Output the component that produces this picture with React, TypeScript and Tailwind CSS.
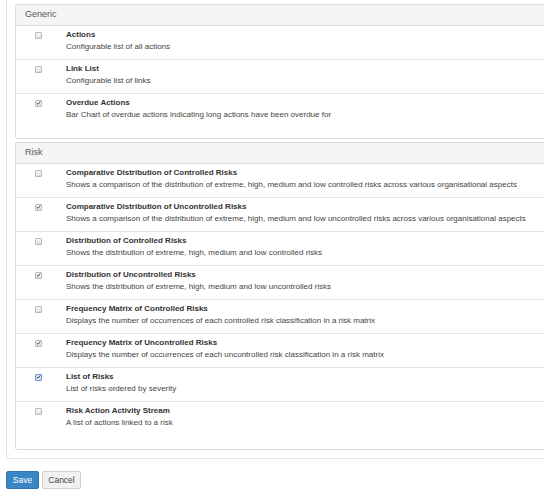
const generic = [
  { title: "Actions", desc: "Configurable list of all actions", checked: false },
  { title: "Link List", desc: "Configurable list of links", checked: false },
  {
    title: "Overdue Actions",
    desc: "Bar Chart of overdue actions indicating long actions have been overdue for",
    checked: true,
  },
];

const risk = [
  {
    title: "Comparative Distribution of Controlled Risks",
    desc: "Shows a comparison of the distribution of extreme, high, medium and low controlled risks across various organisational aspects",
    checked: false,
  },
  {
    title: "Comparative Distribution of Uncontrolled Risks",
    desc: "Shows a comparison of the distribution of extreme, high, medium and low uncontrolled risks across various organisational aspects",
    checked: true,
  },
  {
    title: "Distribution of Controlled Risks",
    desc: "Shows the distribution of extreme, high, medium and low controlled risks",
    checked: false,
  },
  {
    title: "Distribution of Uncontrolled Risks",
    desc: "Shows the distribution of extreme, high, medium and low uncontrolled risks",
    checked: true,
  },
  {
    title: "Frequency Matrix of Controlled Risks",
    desc: "Displays the number of occurrences of each controlled risk classification in a risk matrix",
    checked: false,
  },
  {
    title: "Frequency Matrix of Uncontrolled Risks",
    desc: "Displays the number of occurrences of each uncontrolled risk classification in a risk matrix",
    checked: true,
  },
  { title: "List of Risks", desc: "List of risks ordered by severity", checked: true, focus: true },
  {
    title: "Risk Action Activity Stream",
    desc: "A list of actions linked to a risk",
    checked: false,
  },
];

type Item = { title: string; desc: string; checked: boolean; focus?: boolean };

function Check({ checked, focus }: { checked: boolean; focus?: boolean }) {
  return (
    <span
      className={
        focus
          ? "flex h-[7px] w-[7px] items-center justify-center rounded-[1px] border border-[#6d97c9] bg-[#d6e3f3]"
          : "flex h-[7px] w-[7px] items-center justify-center rounded-[1px] border border-[#b8b8b8] bg-gradient-to-b from-[#fafafa] to-[#e0e0e0]"
      }
    >
      {checked && (
        <svg viewBox="0 0 8 8" className="h-[6px] w-[6px]">
          <path d="M1.3 4.2 L3.2 6 L6.8 1.6" fill="none" stroke="#333" strokeWidth="1.4" />
        </svg>
      )}
    </span>
  );
}

function Panel({ heading, items, tall }: { heading: string; items: Item[]; tall?: boolean }) {
  return (
    <div className="mb-[3px] rounded-[2px] border border-[#dddddd] bg-white">
      <div className="flex h-[21px] items-center border-b border-[#dddddd] bg-[#f5f5f5] px-[9px] text-[9px] text-[#555]">
        {heading}
      </div>
      <ul className={tall ? "pb-[14px]" : "pb-[11px]"}>
        {items.map((item, i) => (
          <li
            key={item.title}
            className={
              "flex pt-[3px] pb-[6px] leading-[12px] " + (i > 0 ? "border-t border-[#e4e4e4]" : "")
            }
          >
            <div className="w-[50px] shrink-0 pl-[19px] pt-[2.5px]">
              <Check checked={item.checked} focus={item.focus} />
            </div>
            <div className="text-[8px]">
              <p className="font-bold text-[#333]">{item.title}</p>
              <p className="text-[#444]">{item.desc}</p>
            </div>
          </li>
        ))}
      </ul>
    </div>
  );
}

export default function App() {
  return (
    <div
      className="h-[502px] w-[544px] overflow-hidden bg-white pl-[6px]"
      style={{ fontFamily: '"Liberation Sans", Arial, sans-serif' }}
    >
      <div className="w-[620px] rounded-b-[2px] border-x border-b border-[#e3e3e3] px-[8px] pt-[4px] pb-[5px]">
        <Panel heading="Generic" items={generic} />
        <Panel heading="Risk" items={risk} tall />
      </div>
      <div className="mt-[12px] flex gap-[3px]">
        <button className="h-[18px] w-[33px] rounded-[2px] border border-[#2f74b0] bg-[#3a85c6] text-[8.5px] text-white">
          Save
        </button>
        <button className="h-[18px] w-[39px] rounded-[2px] border border-[#cfcfcf] bg-[#f1f1f1] text-[8.5px] text-[#444]">
          Cancel
        </button>
      </div>
    </div>
  );
}
